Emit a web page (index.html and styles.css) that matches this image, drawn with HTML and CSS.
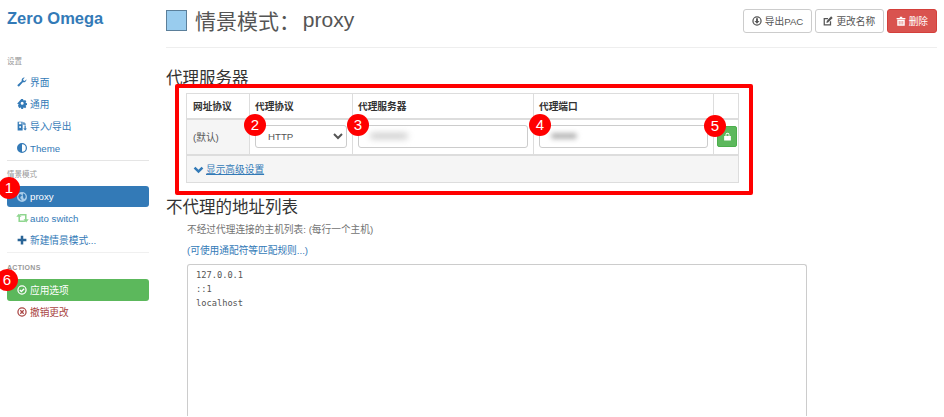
FILE: index.html
```html
<!DOCTYPE html>
<html lang="zh-CN">
<head>
    <meta charset="UTF-8">
    <title>Zero Omega</title>
    <link rel="stylesheet" href="styles.css">
</head>
<body>
    <div class="sidebar">
        <div class="brand">Zero Omega</div>

        <div class="nav-title first">设置</div>
        <a class="nav-item"><svg class="ico" viewBox="0 0 16 16"><path d="M15 4.2a4.2 4.2 0 0 1-5.6 4L3.6 14.6a1.7 1.7 0 0 1-2.4-2.4L7.700 6.500A4.200 4.200 0 0 1 12.300 1L9.800 3.500l.5 2.200 2.200.5L15 3.700z"/></svg>界面</a>
        <a class="nav-item"><svg class="ico" viewBox="0 0 16 16"><path fill-rule="evenodd" d="M6.500 1h3l.4 2 1.200.5 1.700-1.100 2.100 2.100-1.100 1.700.5 1.200 2 .4v3l-2 .4-.5 1.200 1.100 1.700-2.100 2.100-1.700-1.100-1.200.5-.4 2h-3l-.4-2-1.200-.5-1.700 1.100L.9 12.100 2 10.400 1.500 9.200l-2-.4v0zM8 5.500a2.500 2.500 0 1 0 0 5 2.500 2.500 0 0 0 0-5z" transform="translate(0.600 -0.800) scale(0.96)"/></svg>通用</a>
        <a class="nav-item"><svg class="ico" viewBox="0 0 16 16"><path fill-rule="evenodd" d="M1 1h8v14H1zM3 2v3h4V2zM3.500 9.500a1.500 1.500 0 1 0 3 0 1.500 1.500 0 0 0-3 0z"/><path d="M10 2h2v2h2v2h-4zM12 7h2v5h2l-3 3-3-3h2z"/></svg>导入/导出</a>
        <a class="nav-item"><svg class="ico" viewBox="0 0 16 16"><path fill-rule="evenodd" d="M8 0a8 8 0 1 0 0 16A8 8 0 0 0 8 0zm0 2v12A6 6 0 0 0 8 2z"/></svg>Theme</a>
        <div class="divider"></div>

        <div class="nav-title">情景模式</div>
        <a class="nav-item active"><svg class="ico globe" viewBox="0 0 16 16"><path d="M8 0a8 8 0 1 0 0 16A8 8 0 0 0 8 0zM4 3l3 1 1 2-2 1-1 3 2 1v3L3 10 2 7zm6-1 3 2 1 4-2 3-2-1V8L9 5z"/></svg>proxy</a>
        <a class="nav-item"><svg class="ico retweet" viewBox="0 0 20 16"><path d="M4 1 8.500 6H6v6h7l2 2.500H3.500V6H0zM16 15l-4.500-5H14V4H7L5 1.500h11.500V10H20z"/></svg>auto switch</a>
        <a class="nav-item"><svg class="ico plus" viewBox="0 0 16 16"><path d="M6 1h4v5h5v4h-5v5H6v-5H1V6h5z"/></svg>新建情景模式...</a>
        <div class="divider faint"></div>

        <div class="nav-title caps">ACTIONS</div>
        <a class="nav-item apply"><svg class="ico" viewBox="0 0 16 16"><circle cx="8" cy="8" r="6.500" fill="none" stroke="currentColor" stroke-width="2"/><path d="M4.500 8l2.500 2.500L11.500 6" fill="none" stroke="currentColor" stroke-width="2"/></svg>应用选项</a>
        <a class="nav-item cancel"><svg class="ico" viewBox="0 0 16 16"><circle cx="8" cy="8" r="6.500" fill="none" stroke="currentColor" stroke-width="2"/><path d="M5.300 5.300l5.400 5.400M10.700 5.300l-5.400 5.400" fill="none" stroke="currentColor" stroke-width="2"/></svg>撤销更改</a>
    </div>

    <div class="main">
        <div class="page-header">
            <h1><span class="swatch"></span>情景模式： <span class="name">proxy</span></h1>
            <div class="actions">
                <button class="btn"><svg class="ico" viewBox="0 0 16 16"><circle cx="8" cy="8" r="6.500" fill="none" stroke="currentColor" stroke-width="2"/><path d="M6.500 3.500h3V8H12l-4 4.500L4 8h2.500z"/></svg>导出PAC</button>
                <button class="btn"><svg class="ico" viewBox="0 0 16 16"><path d="M12 8.500V14H2V4h6" fill="none" stroke="currentColor" stroke-width="2"/><path d="M13 .5l2.500 2.500L8 10.500 5.500 11 6 8z"/></svg>更改名称</button>
                <button class="btn btn-danger"><svg class="ico" viewBox="0 0 16 16"><path d="M1 3h5V1h4v2h5v2H1zM2 6h12v9.500H2zM4.500 8v5.500h1V8zm3 0v5.500h1V8zm3 0v5.500h1V8z" fill-rule="evenodd"/></svg>删除</button>
            </div>
        </div>

        <h3 class="section">代理服务器</h3>
        <table class="proxy-table">
            <colgroup>
                <col class="c1"><col class="c2"><col class="c3"><col class="c4"><col class="c5">
            </colgroup>
            <tr class="head">
                <th>网址协议</th>
                <th>代理协议</th>
                <th>代理服务器</th>
                <th>代理端口</th>
                <th></th>
            </tr>
            <tr class="row">
                <td class="scheme">(默认)</td>
                <td><select class="field"><option>HTTP</option></select></td>
                <td><div class="field"><span class="blurred wide"></span></div></td>
                <td><div class="field"><span class="blurred"></span></div></td>
                <td class="lock-cell"><button class="lock"><svg viewBox="0 0 16 16"><path d="M2 7h12v8H2zM4.500 7V5a3.500 3.500 0 0 1 7 0v2H10V5a2 2 0 0 0-4 0v2z"/></svg></button></td>
            </tr>
            <tr class="foot">
                <td colspan="5"><svg class="chev" viewBox="0 0 16 16"><path d="M1 6.500 3.500 4 8 8.500 12.500 4 15 6.500 8 13.500z"/></svg><a class="more">显示高级设置</a></td>
            </tr>
        </table>

        <h3 class="section second">不代理的地址列表</h3>
        <div class="bypass">
            <p class="help">不经过代理连接的主机列表: (每行一个主机)</p>
            <p class="help-link">(可使用通配符等匹配规则...)</p>
            <div class="bypass-box">127.0.0.1<br>::1<br>localhost</div>
        </div>
    </div>

    <div class="callout"></div>
    <span class="badge b1">1</span>
    <span class="badge b2">2</span>
    <span class="badge b3">3</span>
    <span class="badge b4">4</span>
    <span class="badge b5">5</span>
    <span class="badge b6">6</span>
</body>
</html>
```

FILE: styles.css
```css
html, body {
    height: 417px;
    overflow: hidden;
}
body {
    margin: 0;
    display: flex;
    position: relative;
    background-color: white;
    color: #555;
    font-family: "Liberation Sans", "Noto Sans CJK SC", sans-serif;
    font-size: 9.7px;
}
.ico {
    width: 10px;
    height: 10px;
    fill: currentColor;
    flex: none;
}

/* sidebar */
.sidebar {
    width: 142px;
    flex: none;
    padding: 0 17px 0 7px;
}
.brand {
    margin-top: 9px;
    height: 19px;
    line-height: 19px;
    font-size: 16.500px;
    font-weight: bold;
    color: #337ab7;
}
.nav-title {
    height: 12px;
    line-height: 12px;
    margin-top: 8px;
    margin-bottom: 5px;
    font-size: 7.500px;
    color: #999;
}
.nav-title.first {
    margin-top: 28px;
    margin-bottom: 3px;
}
.nav-title.caps {
    margin-top: 9px;
    font-weight: bold;
    font-size: 7px;
    letter-spacing: 0.300px;
}
.nav-item {
    display: flex;
    align-items: center;
    gap: 3px;
    height: 22px;
    padding-left: 10px;
    border-radius: 3px;
    color: #337ab7;
}
.nav-item.active {
    background-color: #337ab7;
    color: white;
    height: 21px;
}
.globe {
    color: #a9cdea;
}
.retweet {
    color: #8fd68f;
    width: 13px;
    margin-left: -1px;
    margin-right: -2px;
}
.plus {
    color: #2a6496;
}
.nav-item.apply {
    background-color: #5cb85c;
    color: white;
}
.nav-item.cancel {
    color: #a94442;
}
.divider {
    height: 1px;
    background-color: #e5e5e5;
    margin-top: 1px;
}
.divider.faint {
    background-color: #f0f0f0;
}

/* main column */
.main {
    flex: 1;
    min-width: 0;
    padding-right: 7px;
}
.page-header {
    display: flex;
    justify-content: space-between;
    height: 47px;
    border-bottom: 1px solid #eee;
}
h1 {
    margin: 0;
    display: flex;
    align-items: center;
    height: 40px;
    font-size: 21px;
    font-weight: normal;
    color: #555;
    white-space: pre;
}
.swatch {
    width: 19px;
    height: 19px;
    margin-right: 8px;
    background-color: #99ccee;
    border: 1px solid #5b7f9a;
}
.name {
    margin-left: -3px;
}
.actions {
    display: flex;
    gap: 3px;
    padding-top: 9px;
}
.btn {
    display: flex;
    align-items: center;
    gap: 3px;
    height: 24px;
    padding: 0 7.5px;
    background-color: white;
    border: 1px solid #ccc;
    border-radius: 3px;
    color: #555;
    font-family: inherit;
    font-size: 9.700px;
}
.btn-danger {
    padding: 0 8px;
    background-color: #d9534f;
    border-color: #d43f3a;
    color: white;
}
.section {
    margin: 20px 0 0;
    height: 25px;
    line-height: 20px;
    font-size: 16.500px;
    font-weight: normal;
    color: #333;
}
.section.second {
    margin-top: 14px;
    height: 22px;
}

/* proxy table */
.proxy-table {
    margin-left: 20px;
    width: 552px;
    table-layout: fixed;
    border-collapse: collapse;
    color: #333;
}
.proxy-table th, .proxy-table td {
    border: 1px solid #ddd;
    padding: 0;
}
.c1 { width: 63px; }
.c2 { width: 103px; }
.c3 { width: 181px; }
.c4 { width: 180px; }
.c5 { width: 25px; }
.head {
    height: 25px;
}
.head th {
    text-align: left;
    padding-left: 5px;
    border-bottom-width: 2px;
    font-weight: bold;
}
.head th:first-child {
    padding-left: 6px;
}
.row {
    height: 36px;
}
.row td {
    padding: 0 5px;
    border-bottom-width: 2px;
}
.row .scheme {
    padding-left: 6px;
    background-color: #f5f5f5;
    color: #555;
}
.field {
    display: block;
    box-sizing: border-box;
    width: 100%;
    height: 23px;
    padding: 0 8px;
    background-color: white;
    border: 1px solid #ccc;
    border-radius: 3px;
    color: #555;
    font-family: inherit;
    font-size: 9.700px;
    overflow: hidden;
}
.blurred {
    display: block;
    width: 26px;
    height: 6px;
    margin: 7px 0 0 3px;
    background-color: #b5b5b5;
    border-radius: 3px;
    filter: blur(2.500px);
}
.blurred.wide {
    width: 38px;
    background-color: #ccc;
    filter: blur(3px);
}
.row .lock-cell {
    padding: 0 3px;
}
.lock {
    display: flex;
    align-items: center;
    justify-content: center;
    width: 20px;
    height: 21px;
    padding: 0;
    background-color: #5cb85c;
    border: 1px solid #4cae4c;
    border-radius: 2px;
}
.lock svg {
    width: 9px;
    height: 9px;
    fill: white;
}
.foot {
    height: 28px;
    background-color: #f5f5f5;
}
.foot td {
    padding-left: 6px;
}
.chev {
    width: 11px;
    height: 11px;
    margin-right: 2px;
    vertical-align: -2px;
    fill: #337ab7;
}
.more {
    color: #337ab7;
    text-decoration: underline;
}

/* bypass list */
.bypass {
    margin-left: 21px;
    width: 620px;
}
.help {
    margin: 0;
    height: 21px;
    line-height: 14px;
    padding-top: 4px;
    color: #737373;
}
.help-link {
    margin: 0;
    height: 20px;
    line-height: 14px;
    color: #337ab7;
}
.bypass-box {
    box-sizing: border-box;
    height: 152px;
    padding: 3px 8px;
    background-color: white;
    border: 1px solid #ccc;
    border-bottom: none;
    border-radius: 3px 3px 0 0;
    font-family: "DejaVu Sans Mono", monospace;
    font-size: 8.700px;
    line-height: 14px;
    color: #555;
}

/* annotations drawn over the page */
.callout {
    position: absolute;
    left: 175px;
    top: 84px;
    width: 570px;
    height: 103px;
    border: 4.500px solid #f00;
    border-radius: 2px;
}
.badge {
    position: absolute;
    width: 22px;
    height: 22px;
    line-height: 22px;
    border-radius: 50%;
    background-color: #f00;
    color: white;
    text-align: center;
    font-size: 15px;
}
.b1 { left: -2px; top: 177px; }
.b2 { left: 244px; top: 114px; }
.b3 { left: 347px; top: 114px; }
.b4 { left: 529px; top: 114px; }
.b5 { left: 704px; top: 115px; }
.b6 { left: -4px; top: 269px; }
```
